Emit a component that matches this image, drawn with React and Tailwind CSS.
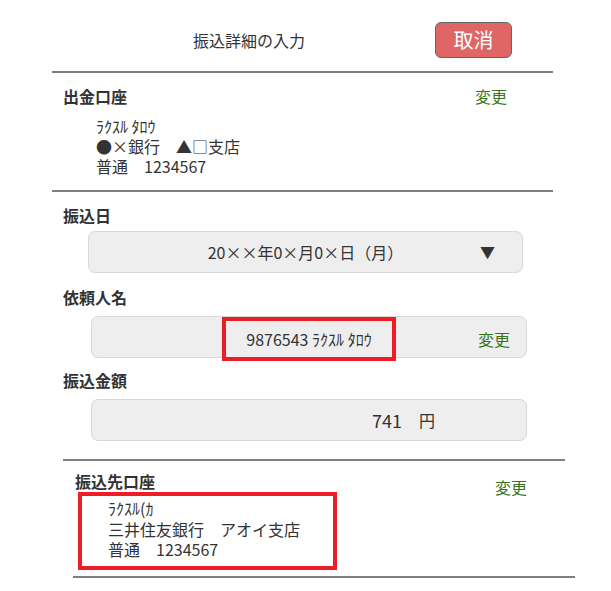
export default function App() {
  return (
    <div
      className="w-[611px] h-[591px] bg-white text-[#333333] flex flex-col overflow-hidden font-['Noto_Sans_CJK_JP',sans-serif]"
    >
      {/* header */}
      <div className="ml-[52px] w-[501px] h-[71px] flex items-start pt-[22px]">
        <div className="h-[36px] flex items-center pl-[141px] text-[16px] leading-[24px]">振込詳細の入力</div>
        <button className="ml-auto mr-[41px] w-[77px] h-[36px] rounded-[6px] bg-[#e06666] border border-[#666666] text-white text-[20px] leading-[34px] flex items-center justify-center">
          取消
        </button>
      </div>
      <div className="ml-[52px] w-[501px] h-[2px] bg-[#7f7f7f]" />

      {/* 出金口座 */}
      <div className="ml-[52px] w-[501px] pt-[11px] pb-[14px]">
        <div className="flex items-center justify-between pl-[11px] pr-[46px] h-[24px]">
          <span className="text-[16px] font-bold leading-[24px]">出金口座</span>
          <span className="text-[16px] leading-[24px] text-[#38761d]">変更</span>
        </div>
        <div className="mt-[8px] pl-[44px] text-[16px] leading-[20px]">
          <div>ﾗｸｽﾙ ﾀﾛｳ</div>
          <div>●×銀行　▲□支店</div>
          <div>普通　1234567</div>
        </div>
      </div>
      <div className="ml-[52px] w-[501px] h-[2px] bg-[#7f7f7f]" />

      {/* 振込日 */}
      <div className="ml-[63px] mt-[11px] text-[16px] font-bold leading-[24px]">振込日</div>
      <div className="ml-[88px] mt-[4px] w-[435px] h-[42px] rounded-[7px] bg-[#eeeeee] border border-[#d9d9d9] grid grid-cols-[1fr_auto_1fr] items-center text-[16px]">
        <div />
        <div className="leading-[24px]">20××年0×月0×日（月）</div>
        <div className="justify-self-end mr-[27px] text-[15px] leading-[24px]">▼</div>
      </div>

      {/* 依頼人名 */}
      <div className="ml-[63px] mt-[12px] text-[16px] font-bold leading-[24px]">依頼人名</div>
      <div className="ml-[91px] mt-[7px] w-[436px] h-[42px] rounded-[7px] bg-[#eeeeee] border border-[#d9d9d9] grid grid-cols-[1fr_auto_1fr] items-center text-[16px]">
        <div />
        <div className="h-[44px] border-[4px] border-[#ee1c24] px-[20px] flex items-center leading-[24px]">
          <span>9876543 ﾗｸｽﾙ ﾀﾛｳ</span>
        </div>
        <div className="justify-self-end mr-[16px] text-[#38761d] leading-[24px]">変更</div>
      </div>

      {/* 振込金額 */}
      <div className="ml-[63px] mt-[10px] text-[16px] font-bold leading-[24px]">振込金額</div>
      <div className="ml-[91px] mt-[7px] w-[436px] h-[42px] rounded-[7px] bg-[#eeeeee] border border-[#d9d9d9] flex items-center justify-end pr-[91px] text-[16px]">
        <span className="text-[18px] leading-[24px]">741</span>
        <span className="ml-[17px] leading-[24px]">円</span>
      </div>

      <div className="ml-[63px] mt-[18px] w-[502px] h-[2px] bg-[#7f7f7f]" />

      {/* 振込先口座 */}
      <div className="ml-[63px] w-[502px] flex items-start">
        <div className="flex flex-col">
          <div className="ml-[12px] mt-[9px] text-[16px] font-bold leading-[22px]">振込先口座</div>
          <div className="ml-[15px] w-[259px] h-[78px] border-[4px] border-[#ee1c24] pl-[26px] pt-[2px] text-[16px] leading-[20.5px]">
            <div>ﾗｸｽﾙ(ｶ</div>
            <div>三井住友銀行　アオイ支店</div>
            <div>普通　1234567</div>
          </div>
        </div>
        <div className="ml-auto mr-[38px] mt-[14px] text-[16px] leading-[24px] text-[#38761d]">変更</div>
      </div>
      <div className="ml-[73px] mt-[6px] w-[502px] h-[2px] bg-[#7f7f7f]" />
    </div>
  );
}
